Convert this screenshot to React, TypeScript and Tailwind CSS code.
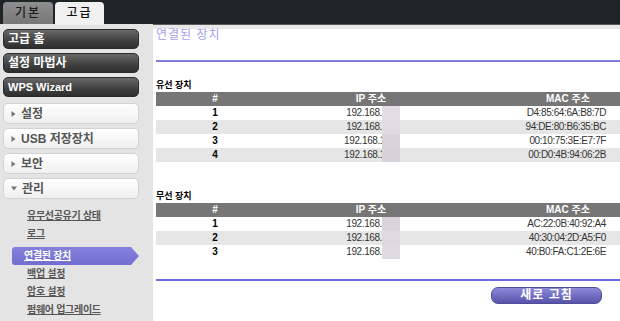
import React from 'react';

type Device = { n: number; ip: string; mac: string; box: string; cut?: boolean };

const wired: Device[] = [
  { n: 1, ip: '192.168.', mac: 'D4:85:64:6A:B8:7D', box: 'bg-[#e2dfe4]' },
  { n: 2, ip: '192.168.', mac: '94:DE:80:B6:35:BC', box: 'bg-[#e0dde2]' },
  { n: 3, ip: '192.168.1', mac: '00:10:75:3E:E7:7F', box: 'bg-[#d8d4dc]', cut: true },
  { n: 4, ip: '192.168.1', mac: '00:D0:4B:94:06:2B', box: 'bg-[#d6d2da]', cut: true },
];

const wireless: Device[] = [
  { n: 1, ip: '192.168.', mac: 'AC:22:0B:40:92:A4', box: 'bg-[#d8d5da]' },
  { n: 2, ip: '192.168.', mac: '40:30:04:2D:A5:F0', box: 'bg-[#dddadf]' },
  { n: 3, ip: '192.168.', mac: '40:B0:FA:C1:2E:6E', box: 'bg-[#dfdce1]' },
];

// small triangle used in the collapsible sidebar sections
function Caret({ down }: { down?: boolean }) {
  return down ? (
    <svg width="6" height="5" viewBox="0 0 6 5" className="shrink-0">
      <path d="M0 0.5 L6 0.5 L3 4.5 Z" fill="#777" />
    </svg>
  ) : (
    <svg width="5" height="6" viewBox="0 0 5 6" className="shrink-0">
      <path d="M0.5 0 L4.5 3 L0.5 6 Z" fill="#777" />
    </svg>
  );
}

function DarkButton({ label, small }: { label: string; small?: boolean }) {
  return (
    <div
      className={`h-[20px] w-[136px] rounded-[5px] border border-[#2a2a2a] bg-gradient-to-b from-[#6a6a6a] via-[#464646] to-[#2e2e2e] pl-[4px] leading-[18px] font-bold text-white ${
        small ? 'text-[11px]' : 'text-[12px]'
      }`}
    >
      {label}
    </div>
  );
}

function LightButton({ label, open }: { label: string; open?: boolean }) {
  return (
    <div className="flex h-[21px] w-[136px] items-center gap-[5px] rounded-[5px] border border-[#d2d2d2] bg-gradient-to-b from-white to-[#efefef] pl-[7px] text-[12px] font-semibold text-[#555]">
      <Caret down={open} />
      <span>{label}</span>
    </div>
  );
}

function SubLink({ label, className = '' }: { label: string; className?: string }) {
  return (
    <div className={`h-[18px] pl-[24px] text-[10px] leading-[18px] font-bold tracking-[-0.3px] text-[#555] underline ${className}`}>
      {label}
    </div>
  );
}

function HeaderRow() {
  return (
    <div className="grid h-[14px] grid-cols-[118px_194px_152px] bg-[#767676] text-[10px] leading-[14px] font-bold text-white">
      <div className="text-center">#</div>
      <div className="text-center">IP 주소</div>
      <div className="pl-[48px] text-center">MAC 주소</div>
    </div>
  );
}

function Row({ d, shade }: { d: Device; shade: boolean }) {
  return (
    <div
      className={`grid h-[14px] grid-cols-[118px_194px_152px] text-[10px] leading-[14px] ${
        shade ? 'bg-[#e6e6e6]' : 'bg-white'
      }`}
    >
      <div className="text-center font-bold text-black">{d.n}</div>
      <div className="flex justify-end pr-[68px] tracking-[-0.4px] text-[#333]">
        <span>{d.ip}</span>
        <span className={`w-[18px] shrink-0 ${d.cut ? '-ml-[3px]' : ''} ${d.box}`} />
      </div>
      <div className="pr-[14px] text-right tracking-[-0.4px] text-[#333]">{d.mac}</div>
    </div>
  );
}

function DeviceTable({ title, rows, className = '' }: { title: string; rows: Device[]; className?: string }) {
  return (
    <div className={className}>
      <div className="h-[12px] text-[9px] leading-[12px] font-bold text-black">{title}</div>
      <div className="mt-[1px]">
        <HeaderRow />
        {rows.map((d, i) => (
          <Row key={d.n} d={d} shade={i % 2 === 1} />
        ))}
      </div>
    </div>
  );
}

export default function App() {
  return (
    <div className="flex h-[321px] w-[620px] flex-col overflow-hidden bg-white [font-family:'Liberation_Sans','Noto_Sans_CJK_KR',sans-serif]">
      {/* tab strip */}
      <div className="flex h-[24px] shrink-0 items-end gap-[2px] bg-[#1f2427] pl-[3px]">
        <div className="h-[22px] w-[50px] rounded-t-[4px] bg-gradient-to-b from-[#8e8e8e] to-[#777] text-center text-[12px] leading-[22px] font-medium tracking-[2px] text-[#1a1a1a]">
          기본
        </div>
        <div className="relative h-[23px] w-[49px] translate-y-[1px] rounded-t-[4px] bg-[#f0f0f0] text-center text-[12px] leading-[22px] font-medium tracking-[2px] text-[#111]">
          고급
        </div>
      </div>

      <div className="flex flex-1">
        {/* sidebar */}
        <aside className="flex w-[153px] shrink-0 flex-col bg-[#e4e4e4] pt-[5px] pl-[3px]">
          <div className="flex flex-col gap-[4px]">
            <DarkButton label="고급 홈" />
            <DarkButton label="설정 마법사" />
            <DarkButton label="WPS Wizard" small />
          </div>
          <div className="mt-[6px] flex flex-col gap-[4px]">
            <LightButton label="설정" />
            <LightButton label="USB 저장장치" />
            <LightButton label="보안" />
            <LightButton label="관리" open />
          </div>
          <div className="mt-[8px] flex flex-col">
            <SubLink label="유무선공유기 상태" className="h-[17px]" />
            <SubLink label="로그" />
            <div className="mt-[4px] ml-[9px] h-[18px] w-[127px] rounded-l-[3px] bg-gradient-to-b from-[#8580dc] to-[#726ecf] pl-[12px] text-[10px] leading-[18px] font-bold tracking-[-0.3px] text-white underline [clip-path:polygon(0_0,calc(100%-8px)_0,100%_50%,calc(100%-8px)_100%,0_100%)]">
              연결된 장치
            </div>
            <SubLink label="백업 설정" />
            <SubLink label="암호 설정" />
            <SubLink label="펌웨어 업그레이드" />
          </div>
        </aside>

        {/* content */}
        <main className="flex flex-1 flex-col">
          <div className="h-[1px] bg-[#5a5a5a]" />
          <div className="h-[4px] bg-[#e8e8e8]" />
          <div className="pl-[3px]">
            <div className="h-[14px] text-[12px] leading-[13px] tracking-[1px] text-[#a3a0ee]">연결된 장치</div>
            <div className="mt-[17px] h-[2px] bg-[#7f7cd8]" />
            <DeviceTable title="유선 장치" rows={wired} className="mt-[17px]" />
            <DeviceTable title="무선 장치" rows={wireless} className="mt-[28px]" />
            <div className="mt-[20px] h-[2px] bg-[#6d6be4]" />
            <div className="mt-[6px] flex justify-end pr-[18px]">
              <button
                type="button"
                className="h-[17px] w-[111px] rounded-[7px] border border-[#4f4c98] bg-gradient-to-b from-[#8d8ad9] to-[#5753aa] text-[12px] leading-[15px] font-bold tracking-[1px] text-white"
              >
                새로 고침
              </button>
            </div>
          </div>
        </main>
      </div>
    </div>
  );
}
